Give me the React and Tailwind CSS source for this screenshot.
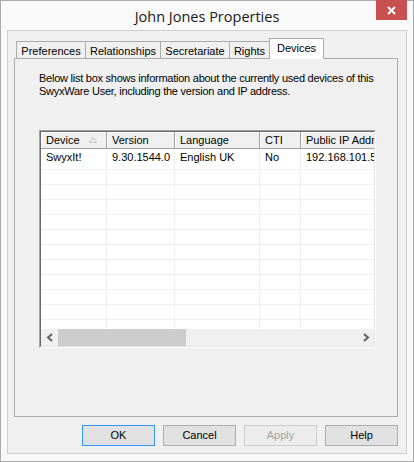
const tabs = [
  { label: 'Preferences', w: 'w-[70px]' },
  { label: 'Relationships', w: 'w-[76px]' },
  { label: 'Secretariate', w: 'w-[70px]' },
  { label: 'Rights', w: 'w-[41px]' },
];

const columns = [
  { label: 'Device', w: 'w-[66px]', sort: true },
  { label: 'Version', w: 'w-[68px]' },
  { label: 'Language', w: 'w-[85px]' },
  { label: 'CTI', w: 'w-[41px]' },
  { label: 'Public IP Address', w: 'w-[100px]' },
];

const devices = [['SwyxIt!', '9.30.1544.0', 'English UK', 'No', '192.168.101.57']];

function SortArrow() {
  return (
    <svg width="8" height="6" viewBox="0 0 8 6" className="ml-auto mr-[9px]">
      <path d="M0.5 5.5 L4 0.5 L7.5 5.5 Z" fill="none" stroke="#c4c4c4" strokeWidth="1" />
    </svg>
  );
}

function Chevron({ dir }) {
  const d = dir === 'left' ? 'M6 1 L2 4.5 L6 8' : 'M2 1 L6 4.5 L2 8';
  return (
    <svg width="8" height="9" viewBox="0 0 8 9">
      <path d={d} fill="none" stroke="#606060" strokeWidth="2" />
    </svg>
  );
}

function DeviceList() {
  const rows = [...devices];
  while (rows.length < 12) rows.push(['', '', '', '', '']);

  return (
    <div className="w-[337px] h-[218px] border border-t-[#a0a0a0] border-l-[#a0a0a0] border-b-white border-r-white">
      <div className="w-full h-full flex flex-col border border-t-[#696969] border-l-[#696969] border-b-[#e3e3e3] border-r-[#e3e3e3] bg-white overflow-hidden">
        {/* header */}
        <div className="flex h-[17px] shrink-0 bg-[#f0f0f0] border-b border-[#a0a0a0]">
          {columns.map((c) => (
            <div
              key={c.label}
              className={`${c.w} shrink-0 flex items-center pl-[5px] border-r border-[#a0a0a0] whitespace-nowrap overflow-hidden shadow-[inset_1px_1px_0_#ffffff]`}
            >
              {c.label}
              {c.sort && <SortArrow />}
            </div>
          ))}
        </div>

        {/* rows */}
        <div className="flex-1 overflow-hidden">
          {rows.map((r, i) => (
            <div key={i} className={`flex ${i === 0 ? 'h-[21px]' : 'h-[15px]'} border-b border-[#f0f0f0]`}>
              {r.map((v, j) => (
                <div
                  key={j}
                  className={`${columns[j].w} shrink-0 pl-[5px] pt-[2px] border-r border-[#f0f0f0] whitespace-nowrap overflow-hidden leading-[13px]`}
                >
                  {v}
                </div>
              ))}
            </div>
          ))}
        </div>

        {/* horizontal scroll bar */}
        <div className="flex h-[17px] shrink-0 bg-[#f0f0f0]">
          <div className="w-[17px] flex items-center justify-center">
            <Chevron dir="left" />
          </div>
          <div className="flex-1 flex">
            <div className="w-[128px] h-full bg-[#cdcdcd]" />
          </div>
          <div className="w-[17px] flex items-center justify-center">
            <Chevron dir="right" />
          </div>
        </div>
      </div>
    </div>
  );
}

function DialogButton({ children, variant }) {
  const styles = {
    default: 'border-[#3399ff] bg-[#e1e1e1] text-black',
    normal: 'border-[#adadad] bg-[#e1e1e1] text-black',
    disabled: 'border-[#cccccc] bg-[#ececec] text-[#a3a3a3]',
  };
  return (
    <button className={`w-[73px] h-[21px] border ${styles[variant]} flex items-center justify-center leading-none`}>
      {children}
    </button>
  );
}

export default function App() {
  return (
    <div
      className="w-[414px] h-[462px] flex flex-col border border-[#aaaaaa] bg-[#f9f9f9] text-[11px] text-black"
      style={{ fontFamily: '"Liberation Sans", Arial, sans-serif' }}
    >
      {/* title bar */}
      <div className="flex h-[29px] shrink-0">
        <div className="w-[37px]" />
        <div
          className="flex-1 flex items-center justify-center text-[14.5px] text-[#1a1a1a] pt-[2px]"
          style={{ fontFamily: '"Open Sans", "Noto Sans", sans-serif' }}
        >
          John Jones Properties
        </div>
        <div className="w-[31px] h-[20px] bg-[#c75050] flex items-center justify-center mt-[-1px] mr-[6px]">
          <svg width="9" height="9" viewBox="0 0 9 9">
            <path d="M1 1 L8 8 M8 1 L1 8" stroke="#ffffff" strokeWidth="2" />
          </svg>
        </div>
      </div>

      {/* client area */}
      <div className="flex-1 mx-[6px] mb-[7px] border border-[#cfcfcf] bg-[#f0f0f0] flex flex-col pt-[7px] pl-[6px] pr-[8px]">
        {/* tab strip */}
        <div className="flex items-end h-[20px] pl-[2px] relative z-10">
          {tabs.map((t, i) => (
            <div
              key={t.label}
              className={`${t.w} h-[17px] ${i > 0 ? '-ml-px' : ''} border border-b-0 border-[#acacac] bg-[#f0f0f0] flex items-center justify-center pt-[2px] whitespace-nowrap`}
            >
              {t.label}
            </div>
          ))}
          <div className="w-[55px] h-[21px] -ml-px -mb-px border border-b-0 border-[#acacac] bg-white flex items-center justify-center pb-[2px]">
            Devices
          </div>
        </div>

        {/* tab page */}
        <div className="h-[359px] border border-[#acacac] bg-[#f0f0f0] pt-[13px] pl-[24px]">
          <p className="leading-[13px] tracking-[-0.25px] w-[350px]">
            Below list box shows information about the currently used devices of this SwyxWare User, including the
            version and IP address.
          </p>
          <div className="mt-[32px]">
            <DeviceList />
          </div>
        </div>

        {/* buttons */}
        <div className="flex justify-end gap-[8px] mt-[8px] pr-[-1px]">
          <DialogButton variant="default">OK</DialogButton>
          <DialogButton variant="normal">Cancel</DialogButton>
          <DialogButton variant="disabled">Apply</DialogButton>
          <DialogButton variant="normal">Help</DialogButton>
        </div>
      </div>
    </div>
  );
}
